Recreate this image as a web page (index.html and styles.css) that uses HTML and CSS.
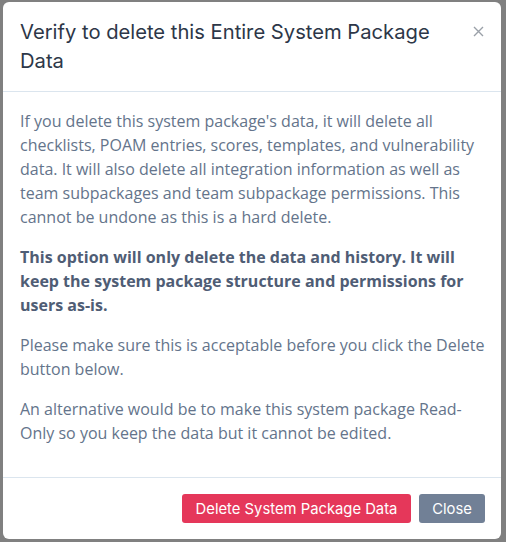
FILE: index.html
```html
<!DOCTYPE html>
<html lang="en">
<head>
<meta charset="utf-8">
<title>Verify delete</title>
<link rel="stylesheet" href="styles.css">
</head>
<body>
<div class="backdrop">
  <div class="modal">
    <div class="modal-header">
      <h5 class="modal-title">Verify to delete this Entire System Package Data</h5>
      <button class="close" type="button" aria-label="Close">
        <svg width="11" height="11" viewBox="0 0 11 11"><path d="M1 1L10 10M10 1L1 10" stroke="#9aa0a8" stroke-width="1.4" fill="none"/></svg>
      </button>
    </div>
    <div class="modal-body">
      <p>If you delete this system package's data, it will delete all checklists, POAM entries, scores, templates, and vulnerability data. It will also delete all integration information as well as team subpackages and team subpackage permissions. This cannot be undone as this is a hard delete.</p>
      <p class="strong">This option will only delete the data and history. It will keep the system package structure and permissions for users as-is.</p>
      <p>Please make sure this is acceptable before you click the Delete button below.</p>
      <p>An alternative would be to make this system package Read-Only so you keep the data but it cannot be edited.</p>
    </div>
    <div class="modal-footer">
      <button class="btn btn-danger" type="button">Delete System Package Data</button>
      <button class="btn btn-secondary" type="button">Close</button>
    </div>
  </div>
</div>
</body>
</html>
```

FILE: styles.css
```css
html, body {
  margin: 0;
  padding: 0;
  height: 100%;
}
body {
  background: #808080;
  font-family: "Open Sans", "Liberation Sans", sans-serif;
  overflow: hidden;
}
.backdrop {
  padding: 2px 5px 0 3px;
}
.modal {
  background: #fff;
  border-radius: 6px;
  height: 537px;
  display: flex;
  flex-direction: column;
  box-sizing: border-box;
}
.modal-header {
  display: flex;
  align-items: flex-start;
  justify-content: space-between;
  padding: 16px 17px 16px 17px;
  border-bottom: 1px solid #dbe5ee;
}
.modal-title {
  margin: 0;
  font-family: "Inter", "Liberation Sans", sans-serif;
  font-weight: 400;
  font-size: 20.2px;
  line-height: 28.5px;
  color: #2d3748;
  width: 430px;
}
.close {
  background: none;
  border: 0;
  padding: 0;
  margin: 8px 0 0 0;
  line-height: 0;
  cursor: pointer;
}
.modal-body {
  flex: 1;
  padding: 17px 14px 0 17px;
}
.modal-body p {
  margin: 0 0 16px 0;
  font-size: 16px;
  line-height: 24px;
  color: #64748b;
}
.modal-body p.strong {
  font-weight: 700;
  color: #4f5d75;
}
.modal-footer {
  display: flex;
  justify-content: flex-end;
  gap: 8px;
  padding: 16px;
  border-top: 1px solid #dbe5ee;
}
.btn {
  border: 0;
  border-radius: 3px;
  height: 29px;
  padding: 0 8px;
  font-family: "Inter", "Liberation Sans", sans-serif;
  font-size: 14.8px;
  color: #fff;
}
.btn-danger {
  background: #e5375a;
  width: 229px;
}
.btn-secondary {
  background: #718096;
  width: 66px;
}
```
